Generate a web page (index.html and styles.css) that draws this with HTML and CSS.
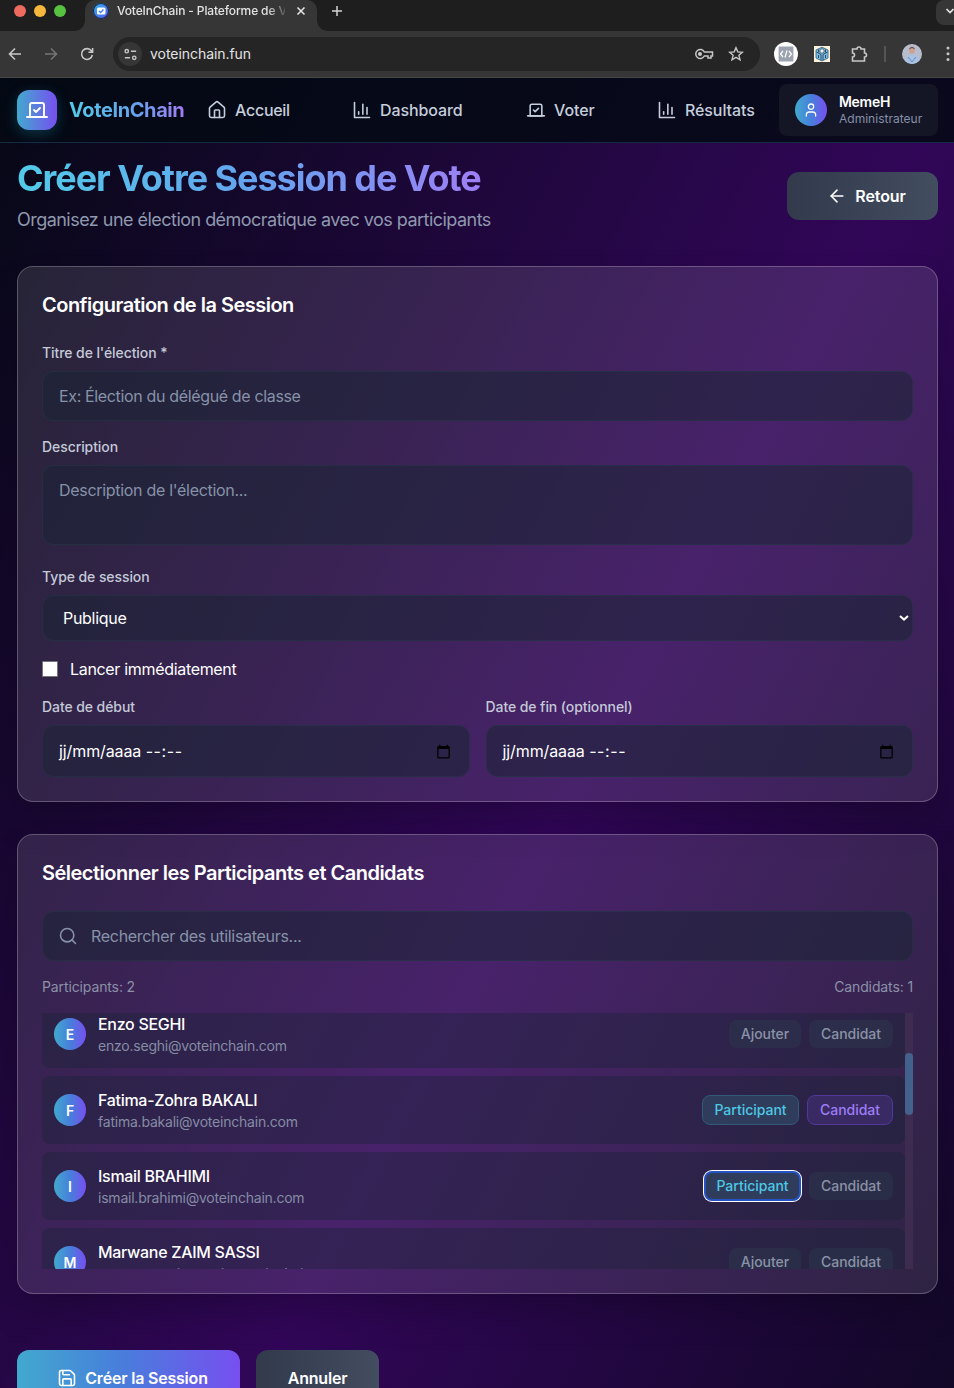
FILE: index.html
```html
<!DOCTYPE html>
<html lang="fr">
<head>
<meta charset="utf-8">
<title>VoteInChain</title>
<link rel="stylesheet" href="styles.css">
</head>
<body>
<svg class="defs" aria-hidden="true">
  <symbol id="vote" viewBox="0 0 24 24"><path d="m9 12 2 2 4-4"/><path d="M5 7c0-1.1.9-2 2-2h10a2 2 0 0 1 2 2v12H5V7Z"/><path d="M22 19H2"/></symbol>
  <symbol id="chart" viewBox="0 0 24 24"><path d="M3 3v18h18"/><path d="M18 17V9"/><path d="M13 17V5"/><path d="M8 17v-3"/></symbol>
  <symbol id="home" viewBox="0 0 24 24"><path d="M15 21v-8a1 1 0 0 0-1-1h-4a1 1 0 0 0-1 1v8"/><path d="M3 10a2 2 0 0 1 .709-1.528l7-5.999a2 2 0 0 1 2.582 0l7 5.999A2 2 0 0 1 21 10v9a2 2 0 0 1-2 2H5a2 2 0 0 1-2-2z"/></symbol>
  <symbol id="cal" viewBox="0 0 24 24"><path d="M20 3h-1V1h-2v2H7V1H5v2H4c-1.100 0-2 .9-2 2v16c0 1.100.9 2 2 2h16c1.100 0 2-.9 2-2V5c0-1.100-.9-2-2-2zm0 18H4V8h16v13z"/></symbol>
  <symbol id="arrow" viewBox="0 0 24 24"><path d="m12 19-7-7 7-7"/><path d="M19 12H5"/></symbol>
</svg>
<div class="window">
  <div class="tabs">
    <div class="lights"><i class="red"></i><i class="yellow"></i><i class="green"></i></div>
    <div class="tab">
      <span class="favicon"><svg viewBox="0 0 16 16"><rect x="4" y="4.500" width="8.500" height="7" rx="1.500" fill="#fff"/><path d="m6 8 1.600 1.600L10.500 6.600" fill="none" stroke="#3f83ee" stroke-width="1.400"/></svg></span>
      <span class="tab-title">VoteInChain - Plateforme de V</span>
      <svg class="close" viewBox="0 0 10 10"><path d="m1.500 1.500 7 7m0-7-7 7"/></svg>
    </div>
    <svg class="plus" viewBox="0 0 12 12"><path d="M6 1v10M1 6h10"/></svg>
    <div class="tab-menu"><svg viewBox="0 0 10 6"><path d="m1.500 1 3.500 3.500L8.500 1"/></svg></div>
  </div>
  <div class="toolbar">
    <svg class="tool back" viewBox="0 0 16 16"><path d="M14 8H2.500M8 2.500 2.500 8 8 13.500"/></svg>
    <svg class="tool fwd" viewBox="0 0 16 16"><path d="M2 8h11.500M8 2.500 13.500 8 8 13.500"/></svg>
    <svg class="tool reload" viewBox="0 0 16 16"><path d="M13.300 9A5.400 5.400 0 1 1 12.400 4.900L13.600 6M13.600 2v4.200H9.400"/></svg>
    <div class="omnibox">
      <span class="site"><svg viewBox="0 0 16 16"><circle cx="4" cy="4.500" r="1.800"/><path d="M8.500 4.500H14M2 11.500h5.500"/><circle cx="12" cy="11.500" r="1.800"/></svg></span>
      <span class="url">voteinchain.fun</span>
      <svg class="key" viewBox="0 0 20 14"><path d="M10.300 5H18.500v4H17v2h-3V9h-3.700A4.500 4.500 0 1 1 10.300 5Z"/><circle cx="6" cy="7" r="1.300" fill="#c7c7c7"/></svg>
      <svg class="star" viewBox="0 0 16 16"><path d="m8 1.700 1.800 4.200 4.600.4-3.500 3 1.100 4.500L8 11.400l-4 2.400 1.100-4.500-3.500-3 4.600-.4Z"/></svg>
    </div>
    <span class="ext-code"><svg viewBox="0 0 18 18"><rect x="1" y="1" width="16" height="16" rx="1" fill="#9da2b0"/><path d="M6 6 3.500 9 6 12M12 6l2.500 3L12 12M10 5.500l-2 7"/></svg></span>
    <svg class="ext-box" viewBox="0 0 16 16"><rect width="16" height="16" fill="#fbf1dc"/><path d="M8 1.200 14 4v8l-6 3-6-3V4Z" fill="#7cc0ea" stroke="#2c5672" stroke-width=".8"/><path d="M2.500 6 7 8.500v5.500M13.500 6 9 8.500v5.500M4.500 3.500v3M11.500 3.500v3M4.500 9v3M11.500 9v3" fill="none" stroke="#2c4b63" stroke-width="1"/><circle cx="8" cy="5" r="2.200" fill="#e9f3f5" stroke="#2c4b63" stroke-width=".8"/></svg>
    <svg class="puzzle" viewBox="0 0 18 18"><path d="M2.500 4H7a2 2 0 0 1 4 0h3.500v4a2 2 0 0 1 0 4v4h-12v-4a2 2 0 0 0 0-4Z"/></svg>
    <span class="sep"></span>
    <svg class="face" viewBox="0 0 20 20"><defs><clipPath id="fc"><circle cx="10" cy="10" r="10"/></clipPath></defs><g clip-path="url(#fc)"><rect width="20" height="20" fill="#b8bccb"/><path d="M3 20c0-6 2-9 5-9.500h4c4 .5 6 4 6 9.500Z" fill="#a9c3e4"/><path d="m6 13 4 5 4-5" stroke="#6c8bb8" fill="none"/><ellipse cx="10" cy="6.300" rx="2.700" ry="3.800" fill="#cda093"/><path d="M7.200 5.500C7 2 13 2 12.800 5.500 11 3.500 9 3.500 7.200 5.500Z" fill="#59443f"/></g></svg>
    <svg class="dots" viewBox="0 0 4 16"><circle cx="2" cy="2" r="1.500"/><circle cx="2" cy="7.700" r="1.500"/><circle cx="2" cy="13.500" r="1.500"/></svg>
  </div>

  <div class="page">
    <nav class="nav">
      <div class="logo"><svg class="ic w24"><use href="#vote"/></svg></div>
      <span class="brand">VoteInChain</span>
      <div class="links">
        <a><svg class="ic"><use href="#home"/></svg><span class="t-acc">Accueil</span></a>
        <a><svg class="ic"><use href="#chart"/></svg><span class="t-dash">Dashboard</span></a>
        <a><svg class="ic"><use href="#vote"/></svg><span class="t-vot">Voter</span></a>
        <a><svg class="ic"><use href="#chart"/></svg><span class="t-res">Résultats</span></a>
      </div>
      <div class="user">
        <span class="avatar"><svg class="ic w16" viewBox="0 0 24 24"><circle cx="12" cy="7" r="4"/><path d="M19 21v-2a4 4 0 0 0-4-4H9a4 4 0 0 0-4 4v2"/></svg></span>
        <div><div class="uname">MemeH</div><div class="role">Administrateur</div></div>
      </div>
    </nav>
    <header class="head">
      <div><h1>Créer Votre Session de Vote</h1><p>Organisez une élection démocratique avec vos participants</p></div>
      <button class="btn grey retour"><svg class="ic"><use href="#arrow"/></svg>Retour</button>
    </header>

    <section class="card config">
      <h2>Configuration de la Session</h2>
      <label class="l1">Titre de l'élection *</label>
      <div class="field f1">Ex: Élection du délégué de classe</div>
      <label class="l2">Description</label>
      <div class="field f2">Description de l'élection...</div>
      <label class="l3">Type de session</label>
      <div class="field f3"><span>Publique</span><svg viewBox="0 0 10 6"><path d="m1 1 4 3.600L9 1"/></svg></div>
      <div class="check"><i></i><span>Lancer immédiatement</span></div>
      <div class="dates">
        <div><label>Date de début</label><div class="field f4"><span>jj/mm/aaaa <em>--:--</em></span><svg><use href="#cal"/></svg></div></div>
        <div><label>Date de fin (optionnel)</label><div class="field f4"><span>jj/mm/aaaa <em>--:--</em></span><svg><use href="#cal"/></svg></div></div>
      </div>
    </section>

    <section class="card people">
      <h2>Sélectionner les Participants et Candidats</h2>
      <div class="field search"><svg class="ic" viewBox="0 0 24 24"><circle cx="11" cy="11" r="8"/><path d="m21 21-4.300-4.300"/></svg><span>Rechercher des utilisateurs...</span></div>
      <div class="counts"><span>Participants: 2</span><span>Candidats: 1</span></div>
      <div class="scroll">
        <div class="list">
          <div class="row"><span class="avatar">E</span><div class="who"><b>Enzo SEGHI</b><small>enzo.seghi@voteinchain.com</small></div><span class="tag add">Ajouter</span><span class="tag">Candidat</span></div>
          <div class="row"><span class="avatar">F</span><div class="who"><b>Fatima-Zohra BAKALI</b><small>fatima.bakali@voteinchain.com</small></div><span class="tag part">Participant</span><span class="tag cand">Candidat</span></div>
          <div class="row"><span class="avatar">I</span><div class="who"><b>Ismail BRAHIMI</b><small>ismail.brahimi@voteinchain.com</small></div><span class="tag part focus">Participant</span><span class="tag">Candidat</span></div>
          <div class="row"><span class="avatar">M</span><div class="who"><b>Marwane ZAIM SASSI</b><small>marwane.zaimsassi@voteinchain.com</small></div><span class="tag add">Ajouter</span><span class="tag">Candidat</span></div>
        </div>
        <div class="bar"><div class="thumb"></div></div>
      </div>
    </section>

    <div class="actions">
      <button class="btn save"><svg class="ic" viewBox="0 0 24 24"><path d="M15.200 3a2 2 0 0 1 1.400.6l3.800 3.800a2 2 0 0 1 .6 1.400V19a2 2 0 0 1-2 2H5a2 2 0 0 1-2-2V5a2 2 0 0 1 2-2z"/><path d="M17 21v-7a1 1 0 0 0-1-1H8a1 1 0 0 0-1 1v7"/><path d="M7 3v4a1 1 0 0 0 1 1h7"/></svg>Créer la Session</button>
      <button class="btn grey cancel">Annuler</button>
    </div>
  </div>
</div>
</body>
</html>
```
FILE: styles.css
```css
* { box-sizing: border-box; }
body { margin: 0; font-family: Inter, "Liberation Sans", sans-serif; color: #fff; }
.defs { display: none; }
svg { flex: none; }
.window { width: 954px; height: 1388px; overflow: hidden; display: flex; flex-direction: column; }

/* browser frame */
.tabs { height: 31px; flex: none; background: #1e1e1e; display: flex; position: relative; }
.lights { width: 85px; display: flex; gap: 8px; padding: 5px 0 0 14px; }
.lights i { width: 12px; height: 12px; border-radius: 50%; }
.red { background: #ed6a5e; }
.yellow { background: #f5b83d; }
.green { background: #57c142; }
.tab { width: 232px; background: #363636; border-radius: 10px 10px 0 0; display: flex; align-items: flex-start; padding: 3px 0 0 8px; position: relative; }
.tab::before, .tab::after { content: ""; position: absolute; bottom: 0; width: 10px; height: 10px; }
.tab::before { left: -10px; background: radial-gradient(circle at 0 0, #1e1e1e 9.500px, #363636 10px); }
.tab::after { right: -10px; background: radial-gradient(circle at 100% 0, #1e1e1e 9.500px, #363636 10px); }
.favicon { width: 16px; height: 16px; border-radius: 50%; background: linear-gradient(135deg, #2cb5f1, #5b55e8); box-shadow: inset 0 0 0 1px #182746; }
.favicon svg { display: block; width: 16px; }
.tab-title { width: 168px; margin-left: 8px; font-size: 12px; font-weight: 500; line-height: 16px; color: #e3e3e3; letter-spacing: -.13px; white-space: nowrap; -webkit-mask: linear-gradient(90deg, #000 150px, transparent 172px); }
.close { width: 10px; height: 10px; margin: 3px 0 0 11px; fill: none; stroke: #e3e3e3; stroke-width: 1.600; }
.plus { width: 12px; height: 12px; margin: 5px 0 0 14px; fill: none; stroke: #d4d4d4; stroke-width: 1.500; }
.tab-menu { margin-left: auto; width: 18px; height: 25px; background: #363636; border-radius: 8px 0 0 8px; padding: 0 0 0 9px; display: flex; }
.tab-menu svg { width: 10px; height: 6px; margin-top: 8px; fill: none; stroke: #e3e3e3; stroke-width: 1.700; }
.toolbar { height: 47px; flex: none; background: #363636; border-bottom: 1px solid #464646; display: flex; align-items: center; padding: 0 0 0 7px; }
.tool { width: 16px; height: 16px; fill: none; stroke: #c7c7c7; stroke-width: 1.600; }
.fwd { margin-left: 20px; stroke: #757575; }
.reload { margin-left: 20px; }
.omnibox { width: 647px; height: 34px; margin-left: 18px; border-radius: 17px; background: #252525; display: flex; align-items: center; padding-left: 5px; }
.site { width: 24px; height: 24px; border-radius: 50%; background: #363636; display: grid; place-items: center; }
.site svg { width: 15px; height: 15px; fill: none; stroke: #c7c7c7; stroke-width: 1.500; }
.url { margin: -2px 0 0 8px; font-size: 14px; color: #e3e3e3; letter-spacing: -.05px; flex: 1; }
.key { width: 20px; height: 14px; fill: none; stroke: #c7c7c7; stroke-width: 1.500; margin-right: 14px; }
.star { width: 16px; height: 16px; fill: none; stroke: #c7c7c7; stroke-width: 1.400; margin-right: 16px; }
.ext-code { width: 24px; height: 24px; border-radius: 50%; background: #fff; margin-left: 14px; display: grid; place-items: center; }
.ext-code svg { width: 18px; fill: none; stroke: #fff; stroke-width: 1.200; }
.ext-box { width: 16px; height: 16px; margin-left: 16px; }
.puzzle { width: 18px; height: 18px; margin-left: 20px; fill: none; stroke: #c7c7c7; stroke-width: 1.600; }
.sep { width: 2px; height: 16px; margin-left: 16px; background: #555; }
.face { width: 20px; height: 20px; margin-left: 16px; }
.dots { width: 4px; height: 16px; margin-left: 24px; fill: #c7c7c7; }

/* application */
.page { flex: 1; overflow: hidden; background: linear-gradient(to bottom right, #060815 0%, #310658 50%, #060815 100%) 0 0 / 100% 1790px; }
.ic { width: 20px; height: 20px; fill: none; stroke: currentColor; stroke-width: 1.900; stroke-linecap: round; stroke-linejoin: round; }
.w24 { width: 24px; height: 24px; }
.w16 { width: 16px; height: 16px; }
.nav { height: 65px; background: rgba(4, 9, 20, .86); border-bottom: 1px solid #152a43; display: flex; align-items: center; padding: 0 16px 0 17px; }
.logo { width: 40px; height: 40px; border-radius: 12px; background: linear-gradient(90deg, #42a9ce, #774ff0); display: grid; place-items: center; box-shadow: 0 4px 14px rgba(34, 180, 220, .25); }
.brand { width: 127px; margin-left: 12px; font-size: 20px; font-weight: 700; letter-spacing: -.4px; white-space: nowrap; background: linear-gradient(90deg, #52cbe8, #64a4ee 50%, #a17cf2 116px); -webkit-background-clip: text; color: transparent; }
.links { width: 583px; padding-left: 12px; display: grid; grid-template-columns: 145px 174px 131px 1fr; }
.links a { display: flex; align-items: center; gap: 8px; margin-left: -1px; font-size: 16px; font-weight: 500; color: #c5cedc; }
.links span { letter-spacing: -.1px; }
.links .t-acc { letter-spacing: -.27px; }
.user { width: 159px; height: 52px; flex: none; border-radius: 8px; background: #141626; display: flex; align-items: center; gap: 12px; padding-left: 16px; }
.avatar { width: 32px; height: 32px; flex: none; border-radius: 50%; background: linear-gradient(90deg, #42a9ce, #477fdb 50%, #774ff0); display: grid; place-items: center; font-size: 14px; font-weight: 600; }
.uname { font-size: 14px; font-weight: 600; line-height: 18px; letter-spacing: -.3px; }
.role { font-size: 12px; line-height: 16px; color: #858fa6; letter-spacing: .02px; }
.head { height: 123px; display: flex; justify-content: space-between; padding: 13px 16px 0 17px; }
h1 { margin: 0; width: max-content; font-size: 36px; line-height: 45px; font-weight: 700; letter-spacing: -1.050px; background: linear-gradient(90deg, #52cbe8, #64a4ee 50%, #9d7ff5); -webkit-background-clip: text; color: transparent; white-space: nowrap; }
.head p { margin: 5px 0 0; font-size: 18px; line-height: 28px; color: #8f98ae; letter-spacing: -.53px; white-space: nowrap; }
.btn { border: 0; border-radius: 12px; display: flex; align-items: center; justify-content: center; gap: 8px; font: 600 16px Inter, sans-serif; color: #fff; letter-spacing: -.2px; padding: 0; }
.grey { background: linear-gradient(90deg, #323a4c, #424d5f); }
.retour { width: 151px; height: 48px; margin-top: 16px; padding-left: 8px; letter-spacing: -.1px; }
.card { width: 921px; margin-left: 17px; border: 1px solid rgba(255, 255, 255, .23); border-radius: 16px; background: rgba(255, 255, 255, .115); padding: 24px; box-shadow: 0 20px 40px -8px rgba(0, 0, 0, .25); }
.config { height: 536px; }
.people { height: 460px; margin-top: 32px; }
h2 { margin: 0; font-size: 20px; line-height: 28px; font-weight: 600; letter-spacing: -.51px; }
label { display: block; font-size: 14px; line-height: 20px; font-weight: 500; letter-spacing: -.08px; color: #c4c9d8; }
.l1 { margin-top: 24px; }
.l2, .l3 { margin-top: 16px; }
.l3 { margin-top: 22px; }
.field { border: 1px solid rgba(38, 58, 72, .5); border-radius: 12px; background: rgba(26, 35, 54, .56); padding: 0 16px; font-size: 16px; color: #8792a8; letter-spacing: -.35px; display: flex; align-items: center; justify-content: space-between; }
.f1 { height: 50px; margin-top: 8px; }
.f2 { height: 80px; margin-top: 8px; align-items: flex-start; padding-top: 14px; letter-spacing: -.3px; }
.f3 { height: 46px; margin-top: 8px; color: #fff; padding: 0 3px 0 20px; letter-spacing: -.3px; }
.f3 svg { width: 10px; height: 6px; fill: none; stroke: #fff; stroke-width: 2; }
.check { margin-top: 16px; height: 24px; display: flex; align-items: center; gap: 12px; font-size: 16px; letter-spacing: -.32px; }
.check i { width: 16px; height: 16px; background: #fff; border: 1px solid #767676; border-radius: 1px; }
.dates { margin-top: 16px; display: grid; grid-template-columns: 1fr 1fr; gap: 16px; }
.f4 { height: 52px; margin-top: 8px; color: #fff; padding-right: 18px; letter-spacing: -.1px; }
.f4 em { font-style: normal; letter-spacing: .6px; }
.f4 svg { width: 15px; height: 15px; }
.search { height: 50px; margin-top: 24px; justify-content: flex-start; gap: 13px; padding-left: 15px; letter-spacing: -.3px; }
.counts { margin-top: 16px; display: flex; justify-content: space-between; font-size: 14px; line-height: 20px; color: #8c91a8; letter-spacing: -.12px; }
.scroll { height: 256px; margin-top: 16px; overflow: hidden; display: flex; }
.list { flex: 1; display: flex; flex-direction: column; gap: 8px; margin-top: -13px; }
.row { height: 68px; flex: none; border-radius: 8px; background: rgba(26, 35, 54, .4); display: flex; align-items: center; padding: 0 12px; }
.who { flex: 1; margin-left: 12px; }
.who b { display: block; font-size: 16px; line-height: 24px; font-weight: 500; letter-spacing: -.3px; }
.who small { display: block; font-size: 14px; line-height: 20px; color: #858ca4; letter-spacing: -.22px; }
.tag { width: 84px; height: 28px; border-radius: 8px; background: rgba(43, 55, 76, .55); color: #8a92a7; font-size: 14px; line-height: 17px; font-weight: 500; letter-spacing: -.02px; display: grid; place-items: center; margin-left: 8px; padding-bottom: 1px; }
.add { width: 72px; }
.part { width: 97px; height: 30px; color: #4dc8e5; background: #303c5c; border: 1px solid #315978; }
.cand { width: 86px; height: 30px; color: #9c7df5; background: #3a2a63; border: 1px solid #51379a; }
.focus { border: 2px solid #2453c4; box-shadow: 0 0 0 1px #fff; }
.bar { width: 8px; background: #3e2b50; padding-top: 40px; }
.thumb { height: 62px; border-radius: 4px; background: #43628b; }
.actions { margin: 56px 0 0 17px; display: flex; gap: 16px; }
.actions .btn { height: 56px; }
.save { width: 223px; background: linear-gradient(90deg, #42a9ce, #477fdb 45%, #774ff0); padding-left: 8px; }
.cancel { width: 123px; }
```
